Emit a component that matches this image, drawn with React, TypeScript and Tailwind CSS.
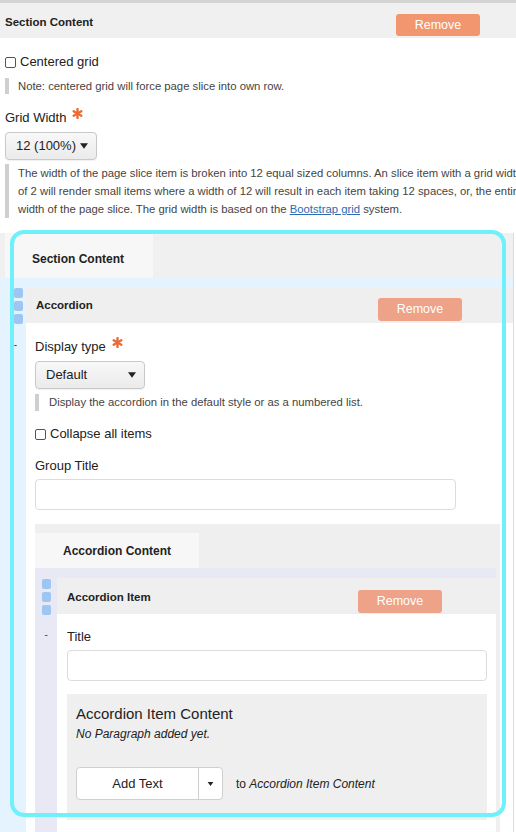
import React from "react";

function Asterisk() {
  return (
    <svg viewBox="0 0 12 12" className="h-[11px] w-[11px]">
      <g stroke="#ef6a30" strokeWidth="2.6" strokeLinecap="round">
        <line x1="6" y1="1.2" x2="6" y2="10.8" />
        <line x1="1.8" y1="3.6" x2="10.2" y2="8.4" />
        <line x1="1.8" y1="8.4" x2="10.2" y2="3.6" />
      </g>
    </svg>
  );
}

function Caret({ className }: { className?: string }) {
  return (
    <svg viewBox="0 0 10 7" className={className}>
      <polygon points="0,0 10,0 5,7" fill="#222" />
    </svg>
  );
}

function Checkbox() {
  return <span className="inline-block h-[11px] w-[11px] shrink-0 rounded-[2px] border border-[#555] bg-white" />;
}

function SelectBox({ label, width }: { label: string; width: string }) {
  return (
    <div
      className={`flex h-[28px] items-center justify-between rounded-[4px] border border-[#c9c9c9] bg-gradient-to-b from-[#f8f8f8] to-[#ebebeb] pl-[10px] pr-[8px] text-[13px] text-[#222] shadow-[0_1px_1px_rgba(0,0,0,0.06)] ${width}`}
    >
      <span>{label}</span>
      <Caret className="h-[6px] w-[8px]" />
    </div>
  );
}

function Handles() {
  return (
    <div className="flex flex-col gap-[3px]">
      <span className="h-[10px] w-[9px] rounded-[2px] bg-[#9dc6f3]" />
      <span className="h-[10px] w-[9px] rounded-[2px] bg-[#9dc6f3]" />
      <span className="h-[10px] w-[9px] rounded-[2px] bg-[#9dc6f3]" />
    </div>
  );
}

function RemoveButton({ light }: { light?: boolean }) {
  return (
    <button
      className={
        light
          ? "h-[23px] w-[84px] rounded-[3px] bg-[#eea287] text-[12.5px] text-white"
          : "h-[22px] w-[84px] rounded-[3px] bg-[#f2966f] text-[12.5px] text-white"
      }
    >
      Remove
    </button>
  );
}

export default function App() {
  return (
    <div className="relative h-[832px] w-[516px] overflow-hidden bg-white font-['Liberation_Sans',Arial,sans-serif] text-[#222]">
      {/* top section header */}
      <div className="h-[3px] bg-[#d3d3d3]" />
      <div className="flex h-[35px] items-start justify-between bg-[#f0f0f0] pl-[5px] pr-[36px] pt-[11px]">
        <span className="text-[11.5px] font-bold leading-[16px]">Section Content</span>
        <RemoveButton />
      </div>

      <div className="px-[5px]">
        <label className="mt-[15px] flex h-[18px] items-center gap-[4px] text-[13px]">
          <Checkbox />
          Centered grid
        </label>
        <div className="mt-[7px] flex h-[16px] items-center border-l-[4px] border-[#cfcfcf] pl-[9px] text-[11.3px] text-[#444]">
          Note: centered grid will force page slice into own row.
        </div>
        <div className="mt-[15px] flex h-[18px] items-center gap-[6px] text-[13px]">
          Grid Width
          <span className="-mt-[10px]">
            <Asterisk />
          </span>
        </div>
        <div className="mt-[5px]">
          <SelectBox label="12 (100%)" width="w-[92px]" />
        </div>
        <div className="mt-[4px] w-[560px] whitespace-nowrap border-l-[4px] border-[#cfcfcf] pl-[9px] text-[11.3px] leading-[18px] text-[#444]">
          The width of the page slice item is broken into 12 equal sized columns. An slice item with a grid width
          <br />
          of 2 will render small items where a width of 12 will result in each item taking 12 spaces, or, the entire
          <br />
          width of the page slice. The grid width is based on the{" "}
          <a className="text-[#2b6cb5] underline">Bootstrap grid</a> system.
        </div>
      </div>

      {/* nested section */}
      <div className="mr-[2px] mt-[15px] border-r border-[#e6dcc0] bg-[#e4f3fd]">
        <div className="flex h-[45px] bg-[#f0f0f0] pl-[5px]">
          <div className="w-[148px] bg-[#f7f7f7] pl-[27px] pt-[19px] text-[12px] font-bold leading-[14px]">
            Section Content
          </div>
        </div>
        <div className="flex pt-[10px]">
          <div className="flex w-[26px] shrink-0 flex-col items-end pr-[3px]">
            <Handles />
            <span className="mr-[6px] mt-[16px] text-[10px] leading-none text-[#333]">-</span>
          </div>
          <div className="flex-1">
            <div className="flex h-[35px] items-start justify-between bg-[#efefef] pl-[10px] pr-[51px]">
              <span className="mt-[9px] text-[11.5px] font-bold leading-[16px]">Accordion</span>
              <div className="mt-[8px]">
                <RemoveButton light />
              </div>
            </div>
            <div className="bg-white pb-[40px] pl-[9px] pt-[15px]">
              <div className="flex h-[18px] items-center gap-[6px] text-[13px]">
                Display type
                <span className="-mt-[10px]">
                  <Asterisk />
                </span>
              </div>
              <div className="mt-[5px]">
                <SelectBox label="Default" width="w-[110px]" />
              </div>
              <div className="mt-[5px] flex h-[17px] items-center border-l-[4px] border-[#cfcfcf] pl-[10px] text-[11.3px] text-[#444]">
                Display the accordion in the default style or as a numbered list.
              </div>
              <label className="mt-[14px] flex h-[18px] items-center gap-[4px] text-[13px]">
                <Checkbox />
                Collapse all items
              </label>
              <div className="mt-[14px] flex h-[18px] items-center text-[13px]">Group Title</div>
              <div className="mt-[4px] h-[31px] w-[421px] rounded-[4px] border border-[#dcdcdc] bg-white" />

              {/* Accordion content */}
              <div className="mr-[13px] mt-[14px] bg-[#efefef] pt-[9px]">
                <div className="flex h-[35px] w-[164px] items-center bg-[#f7f7f7] pl-[28px] text-[12px] font-bold">
                  Accordion Content
                </div>
                <div className="mr-[4px] flex bg-[#e9e9f5] pt-[10px]">
                  <div className="flex w-[22px] shrink-0 flex-col items-center pt-[1px]">
                    <Handles />
                    <span className="mt-[14px] text-[11px] leading-none text-[#3b4a9a]">-</span>
                  </div>
                  <div className="flex-1">
                    <div className="flex h-[36px] items-start justify-between bg-[#efefef] pl-[10px] pr-[54px]">
                      <span className="mt-[11px] text-[11.5px] font-bold leading-[16px]">Accordion Item</span>
                      <div className="mt-[10px]">
                        <RemoveButton light />
                      </div>
                    </div>
                    <div className="bg-white pb-[14px] pl-[10px] pr-[9px] pt-[14px]">
                      <div className="flex h-[18px] items-center text-[13px]">Title</div>
                      <div className="mt-[4px] h-[31px] rounded-[4px] border border-[#dcdcdc] bg-white" />
                      <div className="mt-[13px] bg-[#efefef] pb-[20px] pl-[9px] pt-[11px]">
                        <div className="text-[15px] leading-[18px] text-[#222]">Accordion Item Content</div>
                        <div className="mt-[3px] text-[12px] italic leading-[16px] text-[#222]">No Paragraph added yet.</div>
                        <div className="mt-[25px] flex items-center">
                          <div className="flex h-[33px] overflow-hidden rounded-[4px] border border-[#cfcfcf] bg-white">
                            <span className="flex w-[122px] items-center justify-center border-r border-[#cfcfcf] text-[13px]">
                              Add Text
                            </span>
                            <span className="flex w-[23px] items-center justify-center">
                              <Caret className="h-[4px] w-[7px]" />
                            </span>
                          </div>
                          <span className="ml-[13px] text-[12px]">
                            to <i>Accordion Item Content</i>
                          </span>
                        </div>
                      </div>
                    </div>
                  </div>
                </div>
              </div>
            </div>
          </div>
        </div>
      </div>

      {/* highlight overlay */}
      <div className="pointer-events-none absolute left-[10px] top-[230px] h-[587px] w-[496px] rounded-[14px] border-[4px] border-[#70f0fa]" />
    </div>
  );
}
